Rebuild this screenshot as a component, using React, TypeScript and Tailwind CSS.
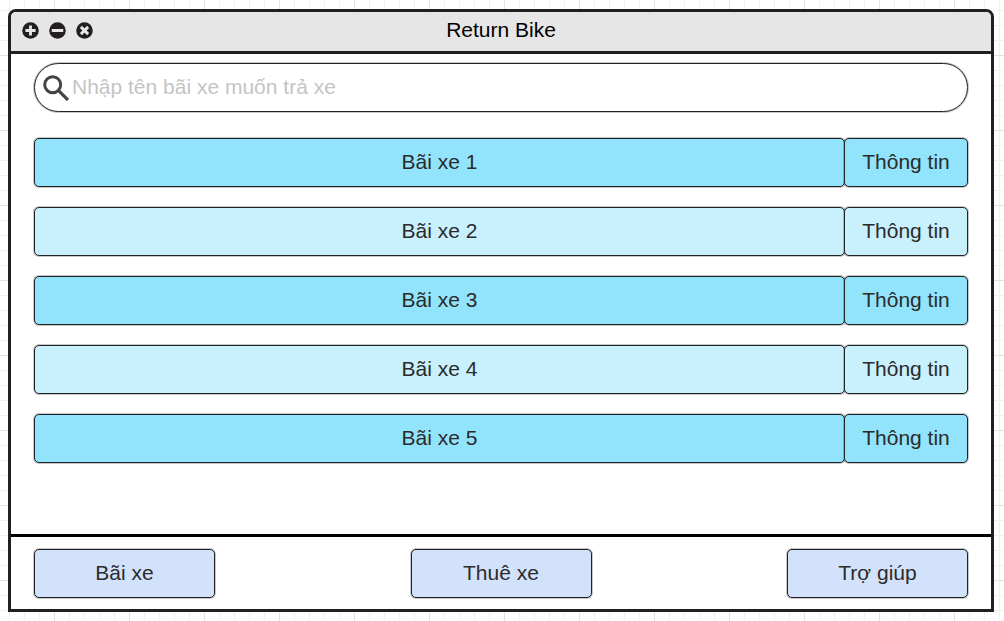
import { useState } from "react";

const GRID =
  "bg-[linear-gradient(#e2e2e2_1px,transparent_1px),linear-gradient(90deg,#e2e2e2_1px,transparent_1px),linear-gradient(#f1f1f1_1px,transparent_1px),linear-gradient(90deg,#f1f1f1_1px,transparent_1px)] bg-[size:75px_75px,75px_75px,15px_15px,15px_15px] bg-[position:0_55px,54px_0,0_10px,9px_0]";

const BOX =
  "h-[49px] cursor-pointer rounded-[5px] border border-[#1f2325] pb-[2px] text-[21px] leading-6 text-[#2b2b2b] shadow-[0_0_0_1px_rgba(35,31,32,0.25)]";

const stations = ["Bãi xe 1", "Bãi xe 2", "Bãi xe 3", "Bãi xe 4", "Bãi xe 5"];
const actions = ["Bãi xe", "Thuê xe", "Trợ giúp"];

const windowControls = [
  { label: "Phóng to", mark: "M8 3.2v9.6M3.2 8h9.6" },
  { label: "Thu nhỏ", mark: "M2.6 8h10.8" },
  { label: "Đóng", mark: "M4.6 4.6l6.8 6.8M11.4 4.6l-6.8 6.8" },
];

function TitleBar() {
  return (
    <header className="grid h-[42px] grid-cols-[1fr_auto_1fr] items-center border-b-[3px] border-[#231f20] bg-[#e6e6e6] px-[11px] pb-[2px]">
      <div className="flex gap-[10px]">
        {windowControls.map((c) => (
          <button key={c.label} type="button" aria-label={c.label} className="size-[17px] cursor-pointer">
            <svg viewBox="0 0 16 16" className="block size-[17px]" aria-hidden="true">
              <circle cx="8" cy="8" r="7.8" fill="#231f20" />
              <path d={c.mark} stroke="#e6e6e6" strokeWidth="2.7" fill="none" />
            </svg>
          </button>
        ))}
      </div>
      <h1 className="pb-[2px] text-[21px] leading-6 text-black">Return Bike</h1>
    </header>
  );
}

function SearchBox() {
  const [query, setQuery] = useState("");
  return (
    <label className="flex h-[49px] items-center gap-[3px] rounded-full border border-[#1f2325] bg-white pr-6 pl-2 shadow-[0_0_0_1px_rgba(35,31,32,0.25)]">
      <svg viewBox="0 0 26 26" className="size-[26px] shrink-0" fill="none" stroke="#444444" aria-hidden="true">
        <circle cx="9.7" cy="9.7" r="8" strokeWidth="3" />
        <path d="M15.6 15.6l9.4 9.4" strokeWidth="3.2" />
      </svg>
      <input
        type="text"
        aria-label="Tìm bãi xe"
        placeholder="Nhập tên bãi xe muốn trả xe"
        value={query}
        onChange={(e) => setQuery(e.target.value)}
        className="min-w-0 flex-1 bg-transparent pb-[2px] text-[21px] leading-6 text-[#2b2b2b] outline-none placeholder:text-[#c4c4c4]"
      />
    </label>
  );
}

export default function App() {
  return (
    <div className={`flex min-h-screen flex-col bg-white pt-[9px] pr-[10px] pb-[9px] pl-2 font-['Liberation_Sans',Arial,sans-serif] ${GRID}`}>
      <div className="flex flex-1 flex-col overflow-hidden rounded-t-lg border-[3px] border-[#231f20] bg-white">
        <TitleBar />
        <main className="flex flex-1 flex-col gap-[26px] px-[23px] pt-[9px] pb-6">
          <SearchBox />
          <ul className="flex flex-col gap-5">
            {stations.map((name, i) => {
              const color = i % 2 === 0 ? "bg-[#92e4fc]" : "bg-[#c9f0fd]";
              return (
                <li key={name} className="flex">
                  <button type="button" className={`${BOX} ${color} min-w-0 flex-1`}>
                    {name}
                  </button>
                  <button type="button" className={`${BOX} ${color} -ml-px w-[124px]`}>
                    Thông tin
                  </button>
                </li>
              );
            })}
          </ul>
        </main>
        <footer className="flex justify-between border-t-[3px] border-black px-[23px] pt-3 pb-[11px]">
          {actions.map((name) => (
            <button key={name} type="button" className={`${BOX} w-[181px] bg-[#d3e2fb]`}>
              {name}
            </button>
          ))}
        </footer>
      </div>
    </div>
  );
}
